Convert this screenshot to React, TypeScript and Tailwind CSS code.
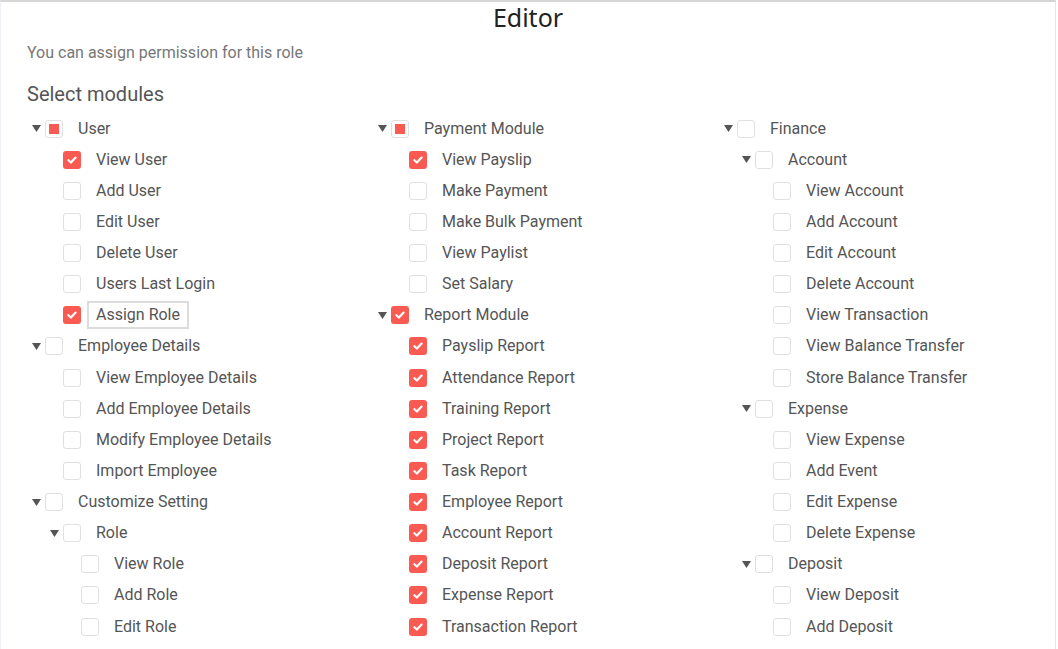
import React from "react";

type State = "checked" | "none" | "partial";
type Node = { label: string; state?: State; children?: Node[]; focus?: boolean };

const col1: Node[] = [
  {
    label: "User",
    state: "partial",
    children: [
      { label: "View User", state: "checked" },
      { label: "Add User" },
      { label: "Edit User" },
      { label: "Delete User" },
      { label: "Users Last Login" },
      { label: "Assign Role", state: "checked", focus: true },
    ],
  },
  {
    label: "Employee Details",
    children: [
      { label: "View Employee Details" },
      { label: "Add Employee Details" },
      { label: "Modify Employee Details" },
      { label: "Import Employee" },
    ],
  },
  {
    label: "Customize Setting",
    children: [
      {
        label: "Role",
        children: [{ label: "View Role" }, { label: "Add Role" }, { label: "Edit Role" }],
      },
    ],
  },
];

const col2: Node[] = [
  {
    label: "Payment Module",
    state: "partial",
    children: [
      { label: "View Payslip", state: "checked" },
      { label: "Make Payment" },
      { label: "Make Bulk Payment" },
      { label: "View Paylist" },
      { label: "Set Salary" },
    ],
  },
  {
    label: "Report Module",
    state: "checked",
    children: [
      "Payslip Report",
      "Attendance Report",
      "Training Report",
      "Project Report",
      "Task Report",
      "Employee Report",
      "Account Report",
      "Deposit Report",
      "Expense Report",
      "Transaction Report",
    ].map((l) => ({ label: l, state: "checked" as State })),
  },
];

const col3: Node[] = [
  {
    label: "Finance",
    children: [
      {
        label: "Account",
        children: [
          "View Account",
          "Add Account",
          "Edit Account",
          "Delete Account",
          "View Transaction",
          "View Balance Transfer",
          "Store Balance Transfer",
        ].map((l) => ({ label: l })),
      },
      {
        label: "Expense",
        children: ["View Expense", "Add Event", "Edit Expense", "Delete Expense"].map((l) => ({ label: l })),
      },
      {
        label: "Deposit",
        children: ["View Deposit", "Add Deposit"].map((l) => ({ label: l })),
      },
    ],
  },
];

function Box({ state }: { state: State }) {
  if (state === "checked") {
    return (
      <span className="flex h-[18px] w-[18px] shrink-0 items-center justify-center rounded-[3px] bg-[#f95b53]">
        <svg width="12" height="12" viewBox="0 0 12 12" fill="none">
          <path d="M2.4 6.2 L4.9 8.5 L9.6 3.6" stroke="white" strokeWidth="2.2" strokeLinecap="round" strokeLinejoin="round" />
        </svg>
      </span>
    );
  }
  return (
    <span className="flex h-[18px] w-[18px] shrink-0 items-center justify-center rounded-[3px] border border-[#e0e0e0] bg-white">
      {state === "partial" && <span className="block h-[10px] w-[10px] bg-[#f95b53]" />}
    </span>
  );
}

function Arrow() {
  return (
    <svg width="9" height="7" viewBox="0 0 9 7">
      <path d="M0 0 L9 0 L4.5 7 Z" fill="#555" />
    </svg>
  );
}

function Rows({ nodes, depth }: { nodes: Node[]; depth: number }) {
  return (
    <>
      {nodes.map((n) => (
        <React.Fragment key={n.label}>
          <div className="flex h-[31.125px] items-center" style={{ paddingLeft: depth * 18 }}>
            <span className="flex w-[18px] shrink-0 items-center justify-center">{n.children ? <Arrow /> : null}</span>
            <Box state={n.state ?? "none"} />
            <span
              className={
                "ml-[6px] flex h-[28px] items-center whitespace-nowrap border-2 px-[7px] " +
                (n.focus ? "border-[#dcdcdc]" : "border-transparent")
              }
            >
              {n.label}
            </span>
          </div>
          {n.children && <Rows nodes={n.children} depth={depth + 1} />}
        </React.Fragment>
      ))}
    </>
  );
}

export default function App() {
  return (
    <div
      className="h-[649px] w-[1058px] overflow-hidden bg-white"
      style={{ fontFamily: "Roboto, 'Liberation Sans', sans-serif" }}
    >
      <div className="h-full w-[1056px] border-l border-r border-t-2 border-l-[#eef0f6] border-r-[#e6e6e6] border-t-[#d6d6d6] pl-[26px]">
        <div
          className="h-[32px] pr-[26px] text-center text-[25px] leading-[30px] text-[#222]"
          style={{ fontFamily: "'Noto Sans', 'Open Sans', sans-serif" }}
        >
          Editor
        </div>
        <div className="mt-[9px] text-[16px] leading-[20px] text-[#777]">You can assign permission for this role</div>
        <div className="mt-[18px] text-[20px] leading-[26px] text-[#555]">Select modules</div>
        <div className="mt-[6px] flex text-[16px] text-[#555]">
          <div className="w-[346px] shrink-0">
            <Rows nodes={col1} depth={0} />
          </div>
          <div className="w-[346px] shrink-0">
            <Rows nodes={col2} depth={0} />
          </div>
          <div className="w-[346px] shrink-0">
            <Rows nodes={col3} depth={0} />
          </div>
        </div>
      </div>
    </div>
  );
}
